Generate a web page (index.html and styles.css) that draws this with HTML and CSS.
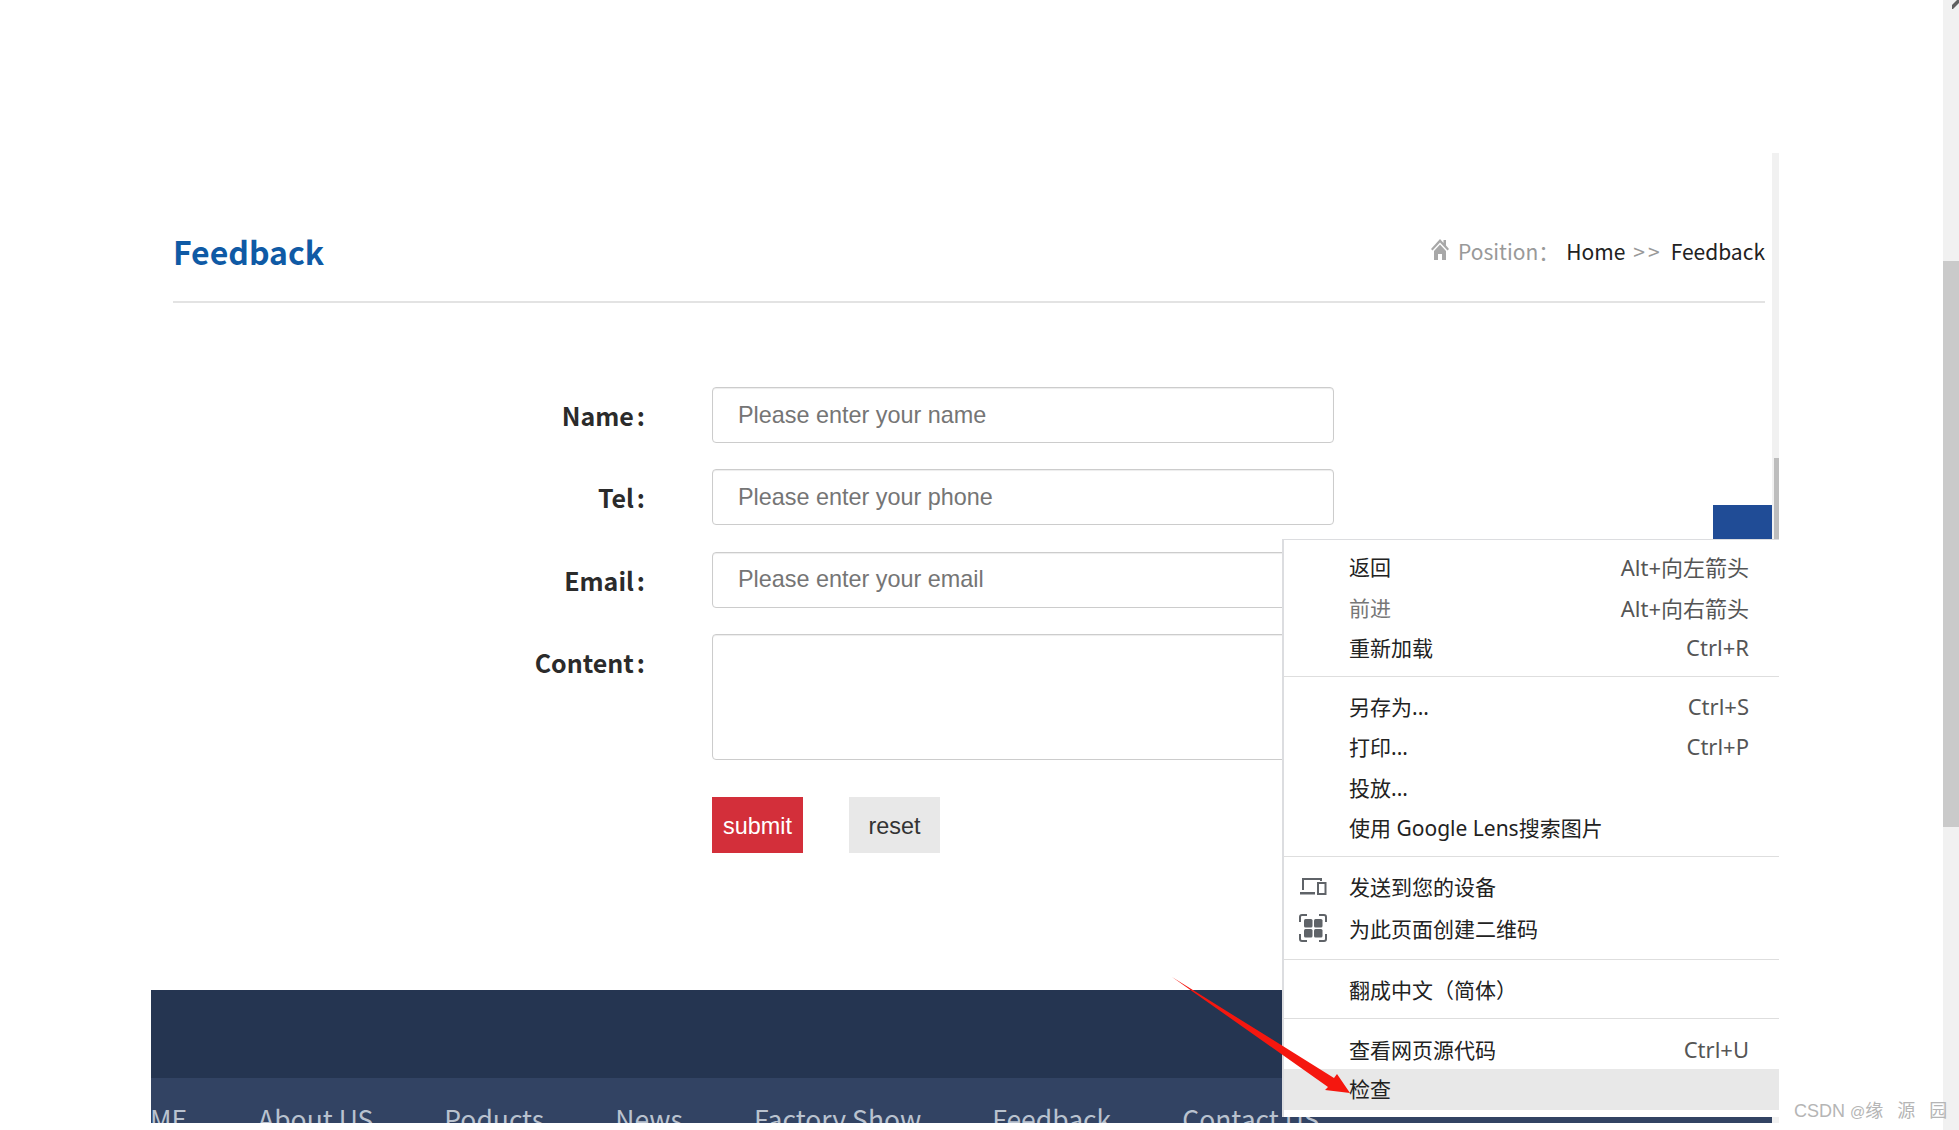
FILE: index.html
```html
<!DOCTYPE html>
<html lang="zh">
<head>
  <meta charset="UTF-8">
  <meta name="viewport" content="width=device-width, initial-scale=1.0">
  <title>Feedback</title>
  <link rel="stylesheet" href="styles.css">
</head>
<body>
  <div class="screen">
    <div class="page">
      <div class="frame">
        <div class="frame-content">
          <div class="page-head">
            <h1 class="page-title">Feedback</h1>
            <div class="crumbs">
              <svg class="home-icon" viewBox="0 0 18 22" width="18" height="22">
                <path d="M9 1 0 11l1.500 1.500L9 4.500l7.500 8L18 11l-3-3.500V2h-2.500v3z" fill="#a8a8a8"/>
                <path d="M3 13 9 6.500l6 6.500v9h-4v-6H7v6H3z" fill="#a8a8a8"/>
              </svg>
              <span class="crumb-label">Position：</span>
              <span class="crumb-link">Home</span>
              <span class="crumb-sep">&gt;&gt;</span>
              <span class="crumb-link">Feedback</span>
            </div>
          </div>
          <form class="feedback-form">
            <label class="form-label">Name<span class="colon">:</span></label>
            <input class="form-input" type="text" placeholder="Please enter your name">
            <label class="form-label">Tel<span class="colon">:</span></label>
            <input class="form-input" type="text" placeholder="Please enter your phone">
            <label class="form-label">Email<span class="colon">:</span></label>
            <input class="form-input" type="text" placeholder="Please enter your email">
            <label class="form-label">Content<span class="colon">:</span></label>
            <textarea class="form-input form-textarea"></textarea>
            <div class="form-buttons">
              <button class="btn btn-submit" type="button">submit</button>
              <button class="btn btn-reset" type="button">reset</button>
            </div>
          </form>
          <div class="footer">
            <div class="footer-top"></div>
            <div class="footer-nav">
              <span>HOME</span>
              <span>About US</span>
              <span>Poducts</span>
              <span>News</span>
              <span>Factory Show</span>
              <span>Feedback</span>
              <span>Contact US</span>
            </div>
          </div>
        </div>
        <div class="frame-scrollbar"><div class="frame-thumb"></div></div>
        <div class="back-top"></div>
      </div>
    </div>
    <div class="outer-scrollbar">
      <svg class="outer-arrow" viewBox="0 0 7 9" width="7" height="9"><path d="M0 9V5l5-5h2v3L1 9z" fill="#606060"/></svg>
      <div class="outer-thumb"></div>
    </div>
  </div>

  <div class="context-menu">
    <div class="menu-group group-first">
      <div class="menu-item"><span>返回</span><span class="shortcut">Alt+向左箭头</span></div>
      <div class="menu-item disabled"><span>前进</span><span class="shortcut">Alt+向右箭头</span></div>
      <div class="menu-item"><span>重新加载</span><span class="shortcut">Ctrl+R</span></div>
    </div>
    <div class="menu-group group-second">
      <div class="menu-item"><span>另存为...</span><span class="shortcut">Ctrl+S</span></div>
      <div class="menu-item"><span>打印...</span><span class="shortcut">Ctrl+P</span></div>
      <div class="menu-item"><span>投放...</span></div>
      <div class="menu-item"><span>使用 Google Lens搜索图片</span></div>
    </div>
    <div class="menu-group group-third">
      <div class="menu-item item-tall">
        <svg class="menu-icon" viewBox="0 0 28 18" width="28" height="18">
          <path d="M4 13V2h18v2" fill="none" stroke="#5f6368" stroke-width="2"/>
          <path d="M1 15h15v2.500H1z" fill="#5f6368"/>
          <rect x="19" y="6" width="7.500" height="11" fill="none" stroke="#5f6368" stroke-width="2"/>
        </svg>
        <span>发送到您的设备</span>
      </div>
      <div class="menu-item item-tall">
        <svg class="menu-icon" viewBox="0 0 28 28" width="28" height="28">
          <path d="M1 8V3a2 2 0 0 1 2-2h5M20 1h5a2 2 0 0 1 2 2v5M27 20v5a2 2 0 0 1-2 2h-5M8 27H3a2 2 0 0 1-2-2v-5" fill="none" stroke="#5f6368" stroke-width="2"/>
          <rect x="5" y="5" width="8.500" height="8.500" rx="1.500" fill="#5f6368"/>
          <rect x="15" y="5" width="8.500" height="8.500" rx="1.500" fill="#5f6368"/>
          <rect x="5" y="15" width="8.500" height="8.500" rx="1.500" fill="#5f6368"/>
          <rect x="15" y="15" width="8.500" height="8.500" rx="1.500" fill="#5f6368"/>
        </svg>
        <span>为此页面创建二维码</span>
      </div>
    </div>
    <div class="menu-group group-fourth">
      <div class="menu-item"><span>翻成中文（简体）</span></div>
    </div>
    <div class="menu-group group-last">
      <div class="menu-item item-short"><span>查看网页源代码</span><span class="shortcut">Ctrl+U</span></div>
      <div class="menu-item active"><span>检查</span></div>
    </div>
  </div>

  <svg class="red-arrow" viewBox="0 0 1959 1130" width="1959" height="1130">
    <polygon points="1172,977 1334,1078 1337,1074 1350,1093 1325,1090 1328,1087" fill="#f5170f"/>
  </svg>

  <div class="watermark">CSDN <span class="watermark-at">@</span>缘&ensp;&nbsp;源&ensp;&nbsp;园</div>
</body>
</html>
```

FILE: styles.css
```css
* {
  box-sizing: border-box;
}
html, body {
  height: 100%;
}
body {
  margin: 0;
  position: relative;
  overflow: hidden;
  background: #fff;
  font-family: "Noto Sans CJK SC", "Noto Sans", sans-serif;
  color: #222;
}
.screen {
  display: flex;
  height: 1130px;
}
.page {
  flex: 1;
  padding: 153px 0 0 151px;
}
.frame {
  position: relative;
  display: flex;
  width: 1628px;
  height: 970px;
  overflow: hidden;
}
.frame-content {
  flex: 1;
  min-width: 0;
}
.frame-scrollbar {
  width: 7px;
  padding-top: 305px;
  background: #f1f1f1;
}
.frame-thumb {
  width: 5px;
  height: 81px;
  margin-left: 2px;
  background: #bdbdbd;
}
.back-top {
  position: absolute;
  top: 352px;
  right: 7px;
  width: 59px;
  height: 35px;
  background: #204c96;
}

/* header */
.page-head {
  display: flex;
  justify-content: space-between;
  align-items: center;
  height: 150px;
  margin: 0 7px 0 22px;
  padding: 49px 0 2px;
  border-bottom: 2px solid #e3e3e3;
}
.page-title {
  margin: 0;
  font-size: 32px;
  font-weight: 700;
  color: #0f5aa5;
  line-height: 1;
}
.crumbs {
  display: flex;
  align-items: center;
  font-size: 21px;
}
.home-icon {
  margin: -3px 9px 0 0;
  filter: blur(0.6px);
}
.crumb-label {
  color: #999;
  margin-right: 7px;
}
.crumb-sep {
  color: #999;
  margin: 0 8px;
  letter-spacing: 3px;
}
.crumb-link {
  color: #222;
}

/* form */
.feedback-form {
  display: grid;
  grid-template-columns: 322px 622px;
  column-gap: 66px;
  row-gap: 26.3px;
  padding: 84px 0 0 173px;
}
.form-label {
  font-size: 25px;
  font-weight: 700;
  line-height: 56px;
  text-align: right;
  color: #2b2b2b;
}
.colon {
  margin: 0 1px 0 3px;
}
.form-input {
  display: block;
  width: 100%;
  height: 56px;
  padding: 0 25px;
  border: 1px solid #ccc;
  border-radius: 4px;
  box-shadow: inset 0 1px 1px rgba(0, 0, 0, 0.075);
  font-family: "Liberation Sans", Arial, sans-serif;
  font-size: 23.4px;
  color: #555;
  background: #fff;
}
.form-input::placeholder {
  color: #757575;
  opacity: 1;
}
.form-textarea {
  height: 126px;
  resize: none;
}
.form-buttons {
  grid-column: 2;
  display: flex;
  gap: 46px;
  margin-top: 10.7px;
}
.btn {
  width: 91px;
  height: 56px;
  padding: 3px 0 0;
  border: none;
  font-family: "Liberation Sans", Arial, sans-serif;
  font-size: 23.4px;
  cursor: pointer;
}
.btn-submit {
  background: #d32f3a;
  color: #fff;
}
.btn-reset {
  background: #e8e8e8;
  color: #333;
}

/* footer */
.footer {
  margin-top: 137px;
}
.footer-top {
  height: 88px;
  background: #253551;
}
.footer-nav {
  display: flex;
  gap: 71px;
  height: 45px;
  padding-top: 22px;
  overflow: hidden;
  background: #324363;
  color: #b9c2cf;
  font-size: 26.5px;
  line-height: 38px;
  white-space: nowrap;
}
.footer-nav span:first-child {
  margin-left: -40px;
}

/* outer scrollbar */
.outer-scrollbar {
  position: relative;
  width: 16px;
  padding-top: 261px;
  background: #f1f1f1;
}
.outer-arrow {
  position: absolute;
  top: 0;
  right: 0;
}
.outer-thumb {
  height: 566px;
  background: #cacaca;
}

/* context menu */
.context-menu {
  position: absolute;
  top: 539px;
  left: 1282px;
  width: 497px;
  height: 578px;
  background: #fff;
  border-top: 1px solid #dcdde0;
  border-left: 2px solid #dcdde0;
  font-family: "Noto Sans", "Noto Sans CJK SC", sans-serif;
  font-size: 21px;
  color: #222;
}
.menu-group {
  border-bottom: 1px solid #dedede;
}
.group-first {
  padding: 6px 0 8.5px;
}
.group-second {
  padding: 8.5px 0;
}
.group-third {
  padding: 8px 0 10px;
}
.group-fourth {
  padding: 8.5px 0 9px;
}
.group-last {
  padding: 10px 0 0;
  border-bottom: none;
}
.menu-item {
  position: relative;
  display: flex;
  justify-content: space-between;
  align-items: center;
  height: 40.500px;
  padding: 0 30px 0 65px;
}
.item-tall {
  height: 42px;
}
.item-short {
  height: 39.500px;
}
.menu-item.disabled {
  color: #777;
}
.menu-item.active {
  height: 41px;
  padding-bottom: 2px;
  background: #e8e8e8;
}
.shortcut {
  font-size: 22px;
  color: #555;
}
.menu-icon {
  position: absolute;
  left: 15px;
  top: 50%;
  transform: translateY(-50%);
}

.red-arrow {
  position: absolute;
  top: 0;
  left: 0;
  pointer-events: none;
}
.watermark {
  position: absolute;
  top: 1097px;
  left: 1794px;
  font-family: "Liberation Sans", "Noto Sans CJK SC", sans-serif;
  font-size: 18px;
  line-height: 28px;
  color: #b5b5b5;
  white-space: nowrap;
}
.watermark-at {
  font-size: 15px;
}
```
